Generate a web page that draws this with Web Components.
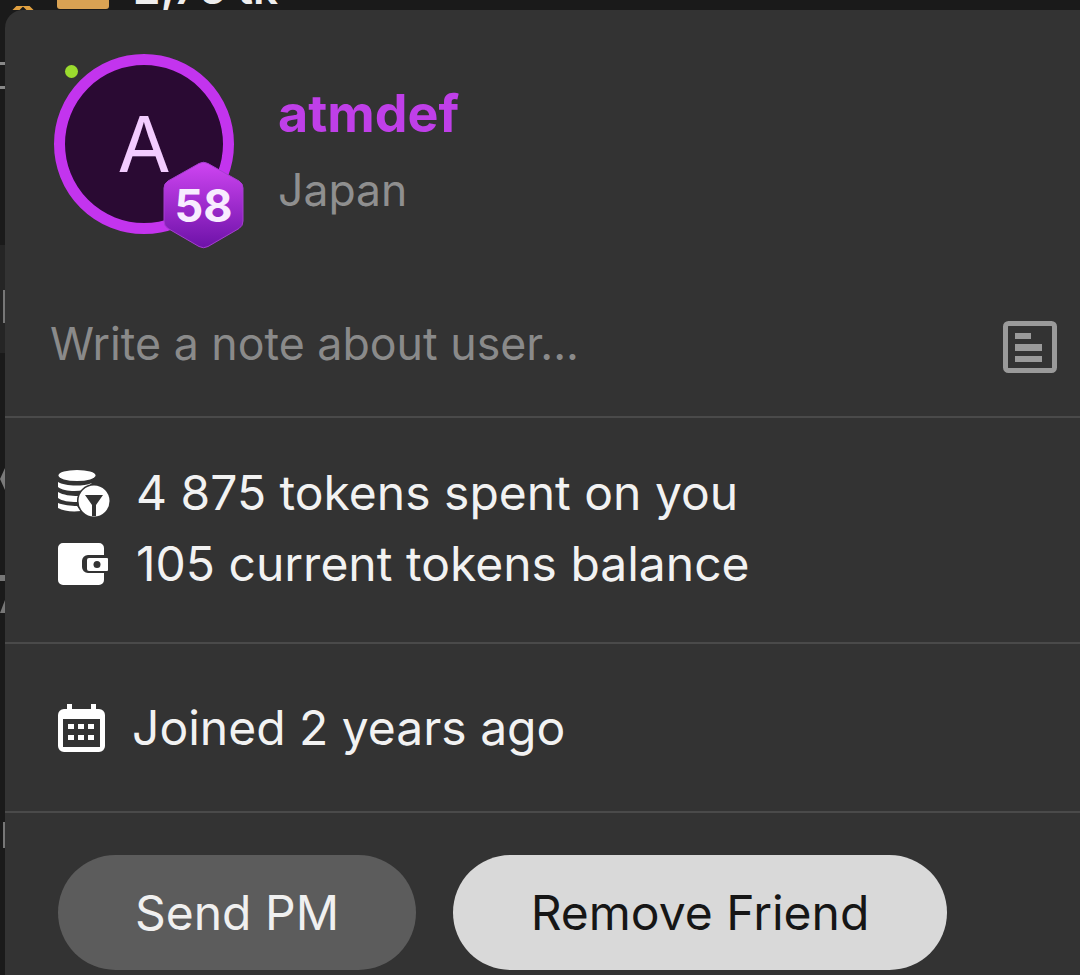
<!DOCTYPE html>
<html lang="en">
<head>
<meta charset="utf-8">
<title>User card</title>
<style>
  html, body { margin: 0; height: 975px; overflow: hidden; background: #1a1a1a; }
  body { font-family: Inter, "Liberation Sans", sans-serif; color: #f2f2f2; }
</style>
</head>
<body>
<page-shell>
  <top-strip slot="top"></top-strip>
  <side-rail slot="rail"></side-rail>
  <user-card>
    <user-head name="atmdef" place="Japan" letter="A" level="58"></user-head>
    <note-row text="Write a note about user..."></note-row>
    <card-section top="51" bottom="54" gap="23">
      <info-row icon="coins" gap="25">4 875 tokens spent on you</info-row>
      <info-row icon="wallet" gap="25">105 current tokens balance</info-row>
    </card-section>
    <card-section top="60" bottom="59" gap="0">
      <info-row icon="calendar" gap="21">Joined 2 years ago</info-row>
    </card-section>
    <button-row>
      <pill-button kind="dark" width="358">Send PM</pill-button>
      <pill-button kind="light" width="494">Remove Friend</pill-button>
    </button-row>
  </user-card>
</page-shell>

<script>
class PageShell extends HTMLElement {
  constructor() {
    super()
    this.attachShadow({ mode: "open" }).innerHTML = `
      <style>
        :host { display: grid; grid-template-columns: 5px 1fr; grid-template-rows: 10px 1fr; height: 975px; overflow: hidden; }
        .top { grid-column: 1 / 3; }
        .rail { grid-row: 2; }
        .main { grid-row: 2; min-width: 0; }
      </style>
      <div class="top"><slot name="top"></slot></div>
      <div class="rail"><slot name="rail"></slot></div>
      <div class="main"><slot></slot></div>`
  }
}

// the bar above the card, cut off by the top of the photo
class TopStrip extends HTMLElement {
  constructor() {
    super()
    this.attachShadow({ mode: "open" }).innerHTML = `
      <style>
        :host { display: flex; align-items: flex-end; height: 10px; overflow: hidden; }
        .x { margin-left: 10px; width: 26px; height: 10px; }
        .box { margin-left: 21px; width: 52px; height: 9px; align-self: flex-start; background: #d9a253; border-radius: 0 0 3px 3px; }
        .amount { margin-left: 24px; font: 600 44px/10px Inter, "Liberation Sans", sans-serif; color: #eee; height: 10px; transform: translateY(-17px); white-space: nowrap; }
      </style>
      <div class="x"><svg width="26" height="10" viewBox="0 0 26 10"><path d="M13 -3 L3 7 M13 -3 L23 7" fill="none" stroke="#e0a040" stroke-width="5"/></svg></div>
      <div class="box"></div>
      <div class="amount">2,76 tk</div>`
  }
}

class SideRail extends HTMLElement {
  constructor() {
    super()
    this.attachShadow({ mode: "open" }).innerHTML = `
      <style>
        :host { display: block; width: 5px; height: 965px; overflow: hidden; }
        .band { height: 108px; margin-top: 156px; padding-top: 45px; box-sizing: border-box; background: #252525; display: flex; justify-content: flex-end; }
        .bar { width: 2px; height: 33px; background: #777; }
        .c1 { width: 5px; height: 3px; margin-top: 52px; background: #888; }
        .c2 { width: 5px; height: 3px; margin-top: 21px; background: #888; }
        .tri { margin-top: 115px; width: 5px; height: 22px; background: #7a7a7a; clip-path: polygon(100% 0, 100% 100%, 0 50%); }
        .line { margin-top: 85px; width: 5px; height: 6px; background: #777; }
        .tick { margin-top: 19px; width: 5px; height: 13px; background: #777; clip-path: polygon(100% 0, 100% 100%, 0 100%); }
        .low { margin: 209px 0 0 3px; width: 2px; height: 26px; background: #777; }
      </style>
      <div class="c1"></div>
      <div class="c2"></div>
      <div class="band"><div class="bar"></div></div>
      <div class="tri"></div>
      <div class="line"></div>
      <div class="tick"></div>
      <div class="low"></div>`
  }
}

class UserCard extends HTMLElement {
  constructor() {
    super()
    this.attachShadow({ mode: "open" }).innerHTML = `
      <style>
        :host { display: flex; flex-direction: column; background: #333333; border-radius: 18px 0 0 0; height: 965px; overflow: hidden; }
      </style>
      <slot></slot>`
  }
}

class UserHead extends HTMLElement {
  connectedCallback() {
    this.attachShadow({ mode: "open" }).innerHTML = `
      <style>
        :host { display: flex; padding: 44px 0 0 49px; gap: 44px; }
        .avatar { position: relative; flex: none; width: 180px; height: 180px; box-sizing: border-box; border: 11px solid #c334ee; border-radius: 50%; background: #2a0a33; display: flex; align-items: center; justify-content: center; font-size: 77px; line-height: 1; color: #f3ccff; }
        .dot { position: absolute; left: 0; top: 0; width: 13px; height: 13px; border-radius: 50%; background: #9bdc2e; }
        .badge { position: absolute; left: 98px; top: 96px; width: 81px; height: 88px; display: flex; align-items: center; justify-content: center; font-size: 45px; font-weight: 700; color: #f8ecff; }
        .badge svg { position: absolute; inset: 0; }
        .badge span { position: relative; }
        .text { display: flex; flex-direction: column; }
        .name { margin-top: 28px; font-size: 52px; line-height: 64px; font-weight: 700; color: #bf3fe8; }
        .place { margin-top: 19px; font-size: 44.500px; line-height: 50px; color: #8f8f8f; }
      </style>
      <div class="avatar">
        ${this.getAttribute("letter")}
        <div class="dot"></div>
        <div class="badge">
          <svg width="81" height="88" viewBox="0 0 81 88">
            <defs><linearGradient id="hex" x1="0" y1="0" x2="0" y2="1">
              <stop offset="0" stop-color="#cf45f2"/><stop offset="1" stop-color="#6d12a8"/>
            </linearGradient></defs>
            <path d="M36 2.500 Q40.500 0 45 2.500 L76 20 Q80 22.500 80 27 L80 60 Q80 65 76 67.500 L45 85.500 Q40.500 88 36 85.500 L5 67.500 Q1 65 1 60 L1 27 Q1 22.500 5 20 Z" fill="url(#hex)" stroke="#a63ed0" stroke-width="1"/>
          </svg>
          <span>${this.getAttribute("level")}</span>
        </div>
      </div>
      <div class="text">
        <div class="name">${this.getAttribute("name")}</div>
        <div class="place">${this.getAttribute("place")}</div>
      </div>`
  }
}

class NoteRow extends HTMLElement {
  connectedCallback() {
    this.attachShadow({ mode: "open" }).innerHTML = `
      <style>
        :host { display: flex; align-items: center; justify-content: space-between; height: 140px; box-sizing: border-box; padding: 0 23px 6px 45px; margin-top: 44px; border-bottom: 2px solid #4a4a4a; }
        .text { font-size: 44.700px; color: #8a8a8a; }
        svg { margin-top: 6px; }
      </style>
      <span class="text">${this.getAttribute("text")}</span>
      <svg width="54" height="52" viewBox="0 0 54 52">
        <rect x="2.500" y="2.500" width="49" height="47" rx="3" fill="none" stroke="#9a9a9a" stroke-width="5"/>
        <path d="M12 12h16v6H12zM12 23h27v7H12zM12 35h27v6H12z" fill="#9a9a9a"/>
      </svg>`
  }
}

class CardSection extends HTMLElement {
  connectedCallback() {
    const s = (name) => this.getAttribute(name)
    this.attachShadow({ mode: "open" }).innerHTML = `
      <style>
        :host { display: flex; flex-direction: column; gap: ${s("gap")}px; padding: ${s("top")}px 0 ${s("bottom")}px 53px; border-bottom: 2px solid #4a4a4a; }
      </style>
      <slot></slot>`
  }
}

const ICONS = {
  coins: `<svg width="53" height="48" viewBox="0 0 53 48">
    <ellipse cx="19" cy="6.500" rx="18.500" ry="5.500" fill="#fff"/>
    <path d="M0 13c6 4 24 5 34 1l-8 7c-9 2-21 1-26-3zM0 23c5 3 13 4 20 4l-1 6c-8 0-15-1-19-4zM0 34c5 2 13 3 19 3l4 5c-9 1-18 0-23-3z" fill="#fff"/>
    <circle cx="36" cy="32" r="17" fill="#333"/>
    <circle cx="36" cy="32" r="15.500" fill="#fff"/>
    <path d="M27 26h18l-7 10v11h-4V36z" fill="#333"/></svg>`,
  wallet: `<svg width="51" height="42" viewBox="0 0 51 42">
    <path d="M5 0h36a5 5 0 0 1 5 5v7H30a6 6 0 0 0-6 6v6a6 6 0 0 0 6 6h16v7a5 5 0 0 1-5 5H5a5 5 0 0 1-5-5V5a5 5 0 0 1 5-5z" fill="#fff"/>
    <path d="M31 15h18a1 1 0 0 1 1 1v11a1 1 0 0 1-1 1H31a2 2 0 0 1-2-2V17a2 2 0 0 1 2-2z" fill="#fff"/>
    <circle cx="39" cy="21.500" r="3.500" fill="#333"/></svg>`,
  calendar: `<svg width="47" height="48" viewBox="0 0 47 48">
    <path d="M9 0h5v5h19V0h5v5h3a6 6 0 0 1 6 6v31a6 6 0 0 1-6 6H6a6 6 0 0 1-6-6V11a6 6 0 0 1 6-6h3z" fill="#fff"/>
    <rect x="5" y="15" width="37" height="28" fill="#333"/>
    <path d="M10 20h6v5h-6zM20 20h6v5h-6zM30 20h6v5h-6zM10 31h6v5h-6zM20 31h6v5h-6zM30 31h6v5h-6z" fill="#fff"/></svg>`
}

class InfoRow extends HTMLElement {
  connectedCallback() {
    this.attachShadow({ mode: "open" }).innerHTML = `
      <style>
        :host { display: flex; align-items: center; gap: ${this.getAttribute("gap")}px; font-size: 48px; line-height: 48px; color: #f2f2f2; }
        .icon { width: 53px; display: flex; justify-content: flex-start; }
        svg { display: block; }
      </style>
      <span class="icon">${ICONS[this.getAttribute("icon")]}</span>
      <span><slot></slot></span>`
  }
}

class ButtonRow extends HTMLElement {
  constructor() {
    super()
    this.attachShadow({ mode: "open" }).innerHTML = `
      <style>
        :host { display: flex; gap: 37px; padding: 42px 0 0 53px; }
      </style>
      <slot></slot>`
  }
}

class PillButton extends HTMLElement {
  connectedCallback() {
    const light = this.getAttribute("kind") === "light"
    this.attachShadow({ mode: "open" }).innerHTML = `
      <style>
        :host { display: flex; align-items: center; justify-content: center; flex: none; width: ${this.getAttribute("width")}px; height: 115px; border-radius: 58px; font-size: 48px; background: ${light ? "#d9d9d9" : "#5c5c5c"}; color: ${light ? "#161616" : "#f0f0f0"}; }
      </style>
      <slot></slot>`
  }
}

customElements.define("page-shell", PageShell)
customElements.define("top-strip", TopStrip)
customElements.define("side-rail", SideRail)
customElements.define("user-card", UserCard)
customElements.define("user-head", UserHead)
customElements.define("note-row", NoteRow)
customElements.define("card-section", CardSection)
customElements.define("info-row", InfoRow)
customElements.define("button-row", ButtonRow)
customElements.define("pill-button", PillButton)
</script>
</body>
</html>
